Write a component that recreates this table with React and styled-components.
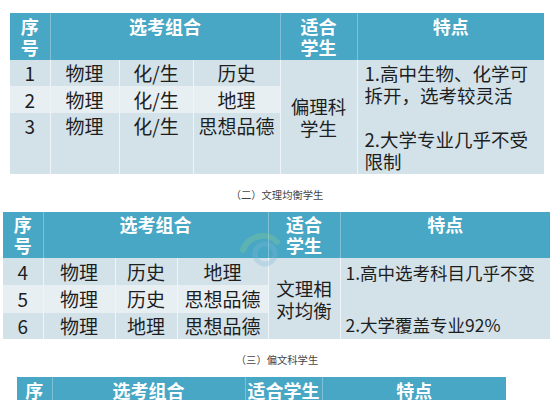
import React from 'react';
import styled, { createGlobalStyle } from 'styled-components';

const GlobalStyle = createGlobalStyle`
  html, body {
    margin: 0;
    padding: 0;
    background: #ffffff;
  }
  body {
    width: 554px;
    height: 400px;
    overflow: hidden;
    font-family: "Noto Sans CJK SC", "Noto Sans", sans-serif;
  }
`;

const Page = styled.div`
  display: flex;
  flex-direction: column;
  padding-top: 13px;
`;

const TableWrap = styled.div`
  position: relative;
  margin-left: ${(p) => p.$left}px;
  width: ${(p) => p.$width}px;
`;

const Table = styled.table`
  width: 100%;
  table-layout: fixed;
  border-collapse: collapse;
  border-spacing: 0;
`;

const HeadCell = styled.th`
  background: #48a7c4;
  color: #ffffff;
  font-size: 18px;
  font-weight: 700;
  line-height: 21px;
  padding: ${(p) => p.$pt || 3}px 0 0;
  vertical-align: top;
  text-align: center;
  border-right: 1px solid #7ec1d6;
  &:last-child {
    border-right: none;
  }
`;

const Row = styled.tr`
  height: ${(p) => p.$h}px;
  background: ${(p) => (p.$light ? '#e8eff3' : '#d3e2e9')};
`;

const Cell = styled.td`
  color: #1e1e1e;
  font-size: 19px;
  line-height: 26px;
  padding: 0;
  text-align: center;
  vertical-align: ${(p) => p.$va || 'middle'};
  border-right: 1px solid #eef4f7;
  white-space: nowrap;
  overflow: hidden;
`;

const SpanCell = styled(Cell)`
  background: #d3e2e9;
  font-size: 18.5px;
  line-height: 22px;
`;

const NoteCell = styled(Cell)`
  background: #d3e2e9;
  text-align: left;
  padding-left: ${(p) => p.$pl || 7}px;
  font-size: ${(p) => p.$fs || 18.5}px;
  line-height: ${(p) => p.$lh || 22}px;
  border-right: none;
`;

const Caption = styled.div`
  padding: 15px 0 0;
  height: 27px;
  box-sizing: border-box;
  margin-bottom: 11px;
  text-align: center;
  font-size: 10.3px;
  line-height: 12px;
  color: #444444;
`;

const Mark = styled.div`
  position: absolute;
  left: 232px;
  top: 16px;
  width: 60px;
  height: 40px;
  pointer-events: none;
  opacity: 0.3;
`;

const Cols = ({ widths }) => (
  <colgroup>
    {widths.map((w, i) => (
      <col key={i} style={{ width: w }} />
    ))}
  </colgroup>
);

const App = () => {
  return (
    <>
      <GlobalStyle />
      <Page>
        <TableWrap $left={10} $width={534}>
          <Table>
            <Cols widths={[40, 69, 74, 87, 77, 187]} />
            <thead>
              <tr style={{ height: 47 }}>
                <HeadCell>序<br />号</HeadCell>
                <HeadCell colSpan={3}>选考组合</HeadCell>
                <HeadCell>适合<br />学生</HeadCell>
                <HeadCell>特点</HeadCell>
              </tr>
            </thead>
            <tbody>
              <Row $h={26}>
                <Cell>1</Cell>
                <Cell>物理</Cell>
                <Cell>化/生</Cell>
                <Cell>历史</Cell>
                <SpanCell rowSpan={3}>偏理科<br />学生</SpanCell>
                <NoteCell rowSpan={3}>
                  1.高中生物、化学可<br />
                  拆开，选考较灵活<br />
                  <br />
                  2.大学专业几乎不受<br />
                  限制
                </NoteCell>
              </Row>
              <Row $h={27} $light>
                <Cell>2</Cell>
                <Cell>物理</Cell>
                <Cell>化/生</Cell>
                <Cell>地理</Cell>
              </Row>
              <Row $h={61}>
                <Cell $va="top">3</Cell>
                <Cell $va="top">物理</Cell>
                <Cell $va="top">化/生</Cell>
                <Cell $va="top">思想品德</Cell>
              </Row>
            </tbody>
          </Table>
        </TableWrap>

        <Caption>（二）文理均衡学生</Caption>

        <TableWrap $left={3} $width={547}>
          <Table>
            <Cols widths={[40, 72, 62, 91, 72, 210]} />
            <thead>
              <tr style={{ height: 46 }}>
                <HeadCell $pt={2}>序<br />号</HeadCell>
                <HeadCell colSpan={3} $pt={2}>选考组合</HeadCell>
                <HeadCell $pt={2}>适合<br />学生</HeadCell>
                <HeadCell $pt={2}>特点</HeadCell>
              </tr>
            </thead>
            <tbody>
              <Row $h={27}>
                <Cell>4</Cell>
                <Cell>物理</Cell>
                <Cell>历史</Cell>
                <Cell>地理</Cell>
                <SpanCell rowSpan={3}>文理相<br />对均衡</SpanCell>
                <NoteCell rowSpan={3} $pl={5} $fs={17.5} $lh={26}>
                  1.高中选考科目几乎不变<br />
                  <br />
                  2.大学覆盖专业92%
                </NoteCell>
              </Row>
              <Row $h={28} $light>
                <Cell>5</Cell>
                <Cell>物理</Cell>
                <Cell>历史</Cell>
                <Cell>思想品德</Cell>
              </Row>
              <Row $h={24}>
                <Cell>6</Cell>
                <Cell>物理</Cell>
                <Cell>地理</Cell>
                <Cell>思想品德</Cell>
              </Row>
            </tbody>
          </Table>
          <Mark>
            <svg width="60" height="40" viewBox="0 0 60 40">
              <path d="M8 22 C14 6, 34 4, 42 14" fill="none" stroke="#8fd08a" strokeWidth="6" strokeLinecap="round" />
              <circle cx="30" cy="26" r="10" fill="none" stroke="#7fb8d8" strokeWidth="5" />
            </svg>
          </Mark>
        </TableWrap>

        <Caption>（三）偏文科学生</Caption>

        <TableWrap $left={17} $width={489}>
          <Table>
            <Cols widths={[35, 193, 77, 184]} />
            <thead>
              <tr style={{ height: 46 }}>
                <HeadCell>序<br />号</HeadCell>
                <HeadCell>选考组合</HeadCell>
                <HeadCell>适合学生</HeadCell>
                <HeadCell>特点</HeadCell>
              </tr>
            </thead>
          </Table>
        </TableWrap>
      </Page>
    </>
  );
};

export default App;
